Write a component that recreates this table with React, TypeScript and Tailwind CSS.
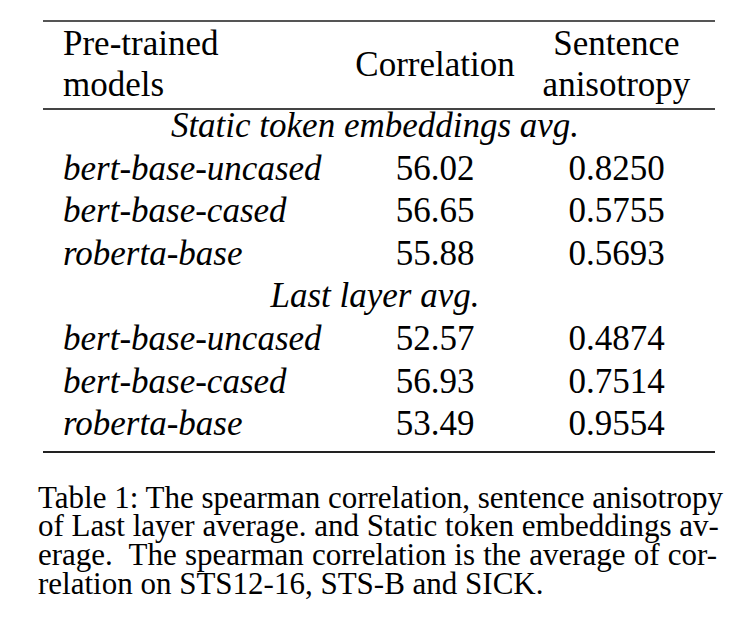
const staticRows = [
  { model: 'bert-base-uncased', corr: '56.02', aniso: '0.8250' },
  { model: 'bert-base-cased', corr: '56.65', aniso: '0.5755' },
  { model: 'roberta-base', corr: '55.88', aniso: '0.5693' },
];

const lastRows = [
  { model: 'bert-base-uncased', corr: '52.57', aniso: '0.4874' },
  { model: 'bert-base-cased', corr: '56.93', aniso: '0.7514' },
  { model: 'roberta-base', corr: '53.49', aniso: '0.9554' },
];

function Group({ title, rows }: { title: string; rows: typeof staticRows }) {
  return (
    <>
      <div className="h-[42.6px] leading-[42.6px] text-center italic pr-[8px]">{title}</div>
      {rows.map((r) => (
        <div key={r.model} className="grid grid-cols-[309px_166px_197px] h-[42.6px] leading-[42.6px]">
          <div className="pl-[20px] italic">{r.model}</div>
          <div className="text-center">{r.corr}</div>
          <div className="text-center">{r.aniso}</div>
        </div>
      ))}
    </>
  );
}

export default function App() {
  return (
    <div className="w-[733px] h-[639px] bg-white text-black font-[Liberation_Serif]">
      <div className="pt-[20px] pl-[43px]">
        <div className="w-[672px] text-[35px]">
          <div className="h-[2px] bg-[#555]" />
          <div className="grid grid-cols-[309px_166px_197px] items-center h-[86px] leading-[41px]">
            <div className="pl-[20px] -mt-[2px]">
              Pre-trained
              <br />
              models
            </div>
            <div className="text-center -mt-[2px]">Correlation</div>
            <div className="text-center -mt-[2px]">
              Sentence
              <br />
              anisotropy
            </div>
          </div>
          <div className="h-[2px] bg-[#444]" />
          <div className="-mt-[5px]">
            <Group title="Static token embeddings avg." rows={staticRows} />
            <Group title="Last layer avg." rows={lastRows} />
          </div>
          <div className="mt-[5px] h-[2px] bg-[#222]" />
        </div>
      </div>

      <div className="mt-[31px] ml-[38px] w-[679px] text-[31px] leading-[28.7px] whitespace-nowrap">
        <div className="text-justify [text-align-last:justify]">Table 1: The spearman correlation, sentence anisotropy</div>
        <div className="text-justify [text-align-last:justify]">of Last layer average. and Static token embeddings av-</div>
        <div className="text-justify [text-align-last:justify]">erage.&nbsp; The spearman correlation is the average of cor-</div>
        <div>relation on STS12-16, STS-B and SICK.</div>
      </div>
    </div>
  );
}
